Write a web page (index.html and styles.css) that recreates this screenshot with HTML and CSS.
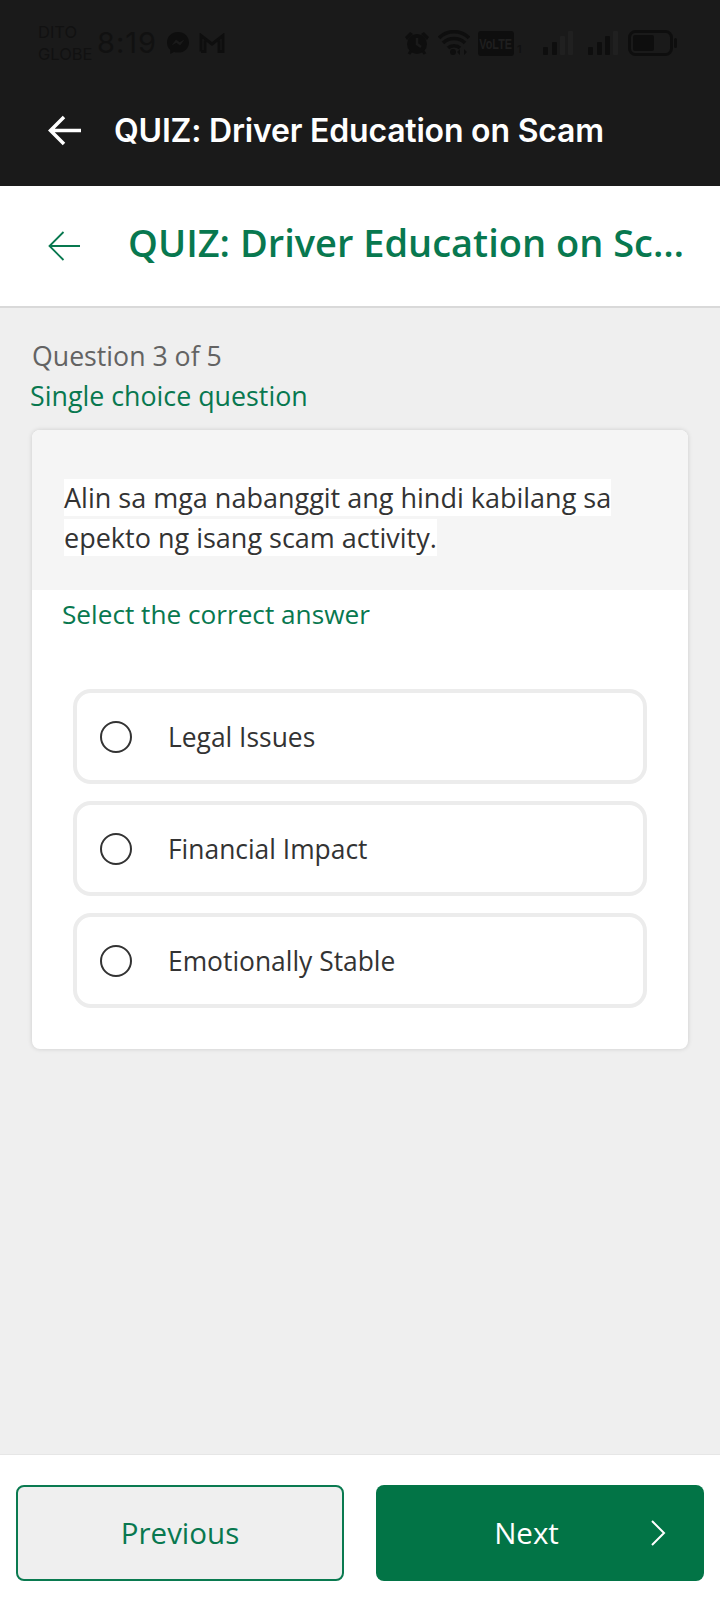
FILE: index.html
```html
<!DOCTYPE html>
<html lang="en">
<head>
<meta charset="utf-8">
<title>Quiz</title>
<link rel="stylesheet" href="styles.css">
</head>
<body>
<div class="app">
  <div class="topbar">
    <div class="status">
      <div class="carrier"><span>DITO</span><span>GLOBE</span></div>
      <div class="clock">8:19</div>
      <svg class="ic-msg" width="24" height="24" viewBox="0 0 24 24"><path class="k" d="M12 1C5.600 1 1 5.500 1 11.400c0 3 1.200 5.600 3.300 7.400V23l3.600-2c1.300.400 2.700.600 4.100.600 6.400 0 11-4.400 11-10.200S18.400 1 12 1z"/><path class="d" d="M5.500 14.500 10 8.500l3.500 2.700L18.500 8.500 14 14.500l-3.500-2.700z"/></svg>
      <svg class="ic-gm" width="26" height="20" viewBox="0 0 26 20"><path class="s" d="M2 18.500V2.500l11 8.500 11-8.500v16h-4V7.500M2 18.500h4V7.500"/></svg>
      <div class="grow"></div>
      <svg class="ic-alarm" width="26" height="26" viewBox="0 0 26 26"><circle class="k" cx="13" cy="14" r="10"/><path class="k" d="M1 7l5-5 3 2-6 6zM25 7l-5-5-3 2 6 6z"/><path class="s2" d="M5 24l2-3M21 24l-2-3"/><path class="ds" d="M13 8v6l4 3"/></svg>
      <svg class="ic-wifi" width="32" height="26" viewBox="0 0 32 26"><path class="s3" d="M1 8c8-8.500 22-8.500 30 0M5 13c6-6 16-6 22 0M10 18c3-3 9-3 12 0"/><circle class="k" cx="15" cy="22" r="3"/><path class="k" d="M22 19v6l-3-3zM26 19v6l3-3z"/></svg>
      <div class="volte"><span>VoLTE</span></div>
      <div class="sim">1</div>
      <svg class="ic-sig" width="30" height="26" viewBox="0 0 30 26"><rect class="k" x="0" y="17" width="5" height="8" rx="1"/><rect class="k" x="9" y="12" width="5" height="13" rx="1"/><rect class="f" x="17" y="6" width="5" height="19" rx="1"/><rect class="f" x="25" y="1" width="5" height="24" rx="1"/></svg>
      <svg class="ic-sig2" width="30" height="26" viewBox="0 0 30 26"><rect class="k" x="0" y="17" width="5" height="8" rx="1"/><rect class="k" x="9" y="12" width="5" height="13" rx="1"/><rect class="k" x="17" y="6" width="5" height="19" rx="1"/><rect class="f" x="25" y="1" width="5" height="24" rx="1"/></svg>
      <svg class="ic-bat" width="50" height="26" viewBox="0 0 50 26"><rect class="s" x="1.500" y="1.500" width="42" height="23" rx="6"/><rect class="k" x="5" y="5" width="21" height="16" rx="2"/><rect class="k" x="46" y="8" width="3" height="10" rx="1.500"/></svg>
    </div>
    <div class="appbar">
      <svg class="back" width="34" height="32" viewBox="0 0 34 32"><path d="M33 15.500H3M16 2 2.500 15.500 16 29" fill="none" stroke="#fff" stroke-width="3.500"/></svg>
      <div class="apptitle">QUIZ: Driver Education on Scam</div>
    </div>
  </div>

  <header class="pagehead">
    <svg class="back" width="34" height="30" viewBox="0 0 34 30"><path d="M33 15H3M16.500 1 2.500 15l14 14" fill="none" stroke="#08784f" stroke-width="1.800"/></svg>
    <h1 class="pagetitle">QUIZ: Driver Education on Scam</h1>
  </header>

  <main class="content">
    <div class="progress">Question 3 of 5</div>
    <div class="qtype">Single choice question</div>
    <section class="card">
      <div class="qhead"><p class="qtext"><span>Alin sa mga nabanggit ang hindi kabilang sa epekto ng isang scam activity.</span></p></div>
      <div class="select">Select the correct answer</div>
      <div class="options">
        <label class="option"><span class="radio"></span><span class="otext">Legal Issues</span></label>
        <label class="option"><span class="radio"></span><span class="otext">Financial Impact</span></label>
        <label class="option"><span class="radio"></span><span class="otext">Emotionally Stable</span></label>
      </div>
    </section>
  </main>

  <footer class="footer">
    <button class="btn prev">Previous</button>
    <button class="btn next"><span>Next</span><svg class="chev" width="16" height="26" viewBox="0 0 16 26"><path d="M2 1l12 12L2 25" fill="none" stroke="#fff" stroke-width="2"/></svg></button>
  </footer>
</div>
</body>
</html>
```

FILE: styles.css
```css
* { box-sizing: border-box; }
html, body { margin: 0; padding: 0; }
body { width: 720px; height: 1610px; overflow: hidden; font-family: "Open Sans", "Noto Sans", sans-serif; }
.app { width: 720px; height: 1610px; display: flex; flex-direction: column; background: #efefef; }

.topbar { height: 186px; flex: none; background: #1a1a1a; }
.status { height: 84px; padding: 2px 42px 0 38px; display: flex; align-items: center; color: #111; }
.status .k { fill: #0e0e0e; }
.status .f { fill: #202020; }
.status .d { fill: #1a1a1a; }
.status .s { fill: none; stroke: #0e0e0e; stroke-width: 3; }
.status .s2 { fill: none; stroke: #0e0e0e; stroke-width: 3; }
.status .s3 { fill: none; stroke: #0e0e0e; stroke-width: 3.500; }
.status .ds { fill: none; stroke: #1a1a1a; stroke-width: 2.500; }
.carrier { display: flex; flex-direction: column; font: 400 16.500px/22px Inter, sans-serif; width: 59px; }
.clock { font: 400 29px/36px Inter, sans-serif; letter-spacing: 1px; width: 69px; }
.ic-gm { margin-left: 9px; }
.grow { flex: 1; }
.ic-alarm { margin-right: 8px; }
.ic-wifi { margin-right: 8px; }
.volte { width: 36px; height: 25px; border-radius: 3px; background: #0e0e0e; color: #1f1f1f; font: 700 15px/25px "Liberation Sans", sans-serif; text-align: center; overflow: hidden; }
.volte span { display: inline-block; transform: scaleX(.72); transform-origin: center; margin: 0 -6px; }
.sim { font: 600 11px/12px Inter, sans-serif; width: 8px; margin: 12px 18px 0 3px; }
.ic-sig { margin-right: 15px; }
.ic-sig2 { margin-right: 10px; }

.appbar { height: 102px; display: flex; align-items: center; padding: 0 0 8px 48px; }
.apptitle { margin-left: 32px; color: #fff; font: 600 32px/40px Inter, sans-serif; letter-spacing: -.2px; white-space: nowrap; }

.pagehead { height: 122px; flex: none; display: flex; align-items: center; padding: 0 28px 0 47px; background: #fff; border-bottom: 2px solid #d9d9d9; }
.pagehead .back { flex: none; }
.pagetitle { margin: 0 0 8px 47px; min-width: 0; color: #08784f; font: 600 38px/50px "Open Sans", sans-serif; white-space: nowrap; overflow: hidden; text-overflow: ellipsis; }

.content { flex: 1; padding: 29px 32px 0; }
.progress { color: #636363; font-size: 26.700px; line-height: 38px; }
.qtype { margin-left: -2px; color: #08784f; font-size: 26.800px; line-height: 41px; }
.card { margin-top: 14px; height: 619px; background: #fff; border-radius: 8px; box-shadow: 0 0 5px rgba(0,0,0,.14); overflow: hidden; }
.qhead { height: 160px; padding: 48px 32px 0; background: #f5f5f5; }
.qtext { margin: 0; width: 590px; color: #333; font-size: 27px; line-height: 40px; }
.qtext span { background: #fff; }
.select { margin: 6px 0 0 30px; color: #08784f; font-size: 26.200px; line-height: 36px; }
.options { display: flex; flex-direction: column; gap: 17px; margin: 57px 41px 0; }
.option { height: 95px; display: flex; align-items: center; padding-left: 23px; border: 4px solid #ececec; border-radius: 18px; }
.radio { width: 32px; height: 32px; flex: none; border: 2.500px solid #333; border-radius: 50%; }
.otext { margin-left: 36px; color: #333; font-size: 26.400px; }

.footer { height: 156px; flex: none; display: flex; justify-content: space-between; padding: 30px 16px 0; background: #fff; border-top: 1px solid #e6e6e6; }
.btn { width: 328px; height: 96px; border-radius: 8px; font: 400 29.500px/40px "Open Sans", sans-serif; }
.prev { background: #efefef; border: 2px solid #0a7a50; color: #08784f; }
.next { position: relative; background: #027446; border: 0; color: #fff; padding-right: 33px; }
.chev { position: absolute; right: 38px; top: 35px; }
```
